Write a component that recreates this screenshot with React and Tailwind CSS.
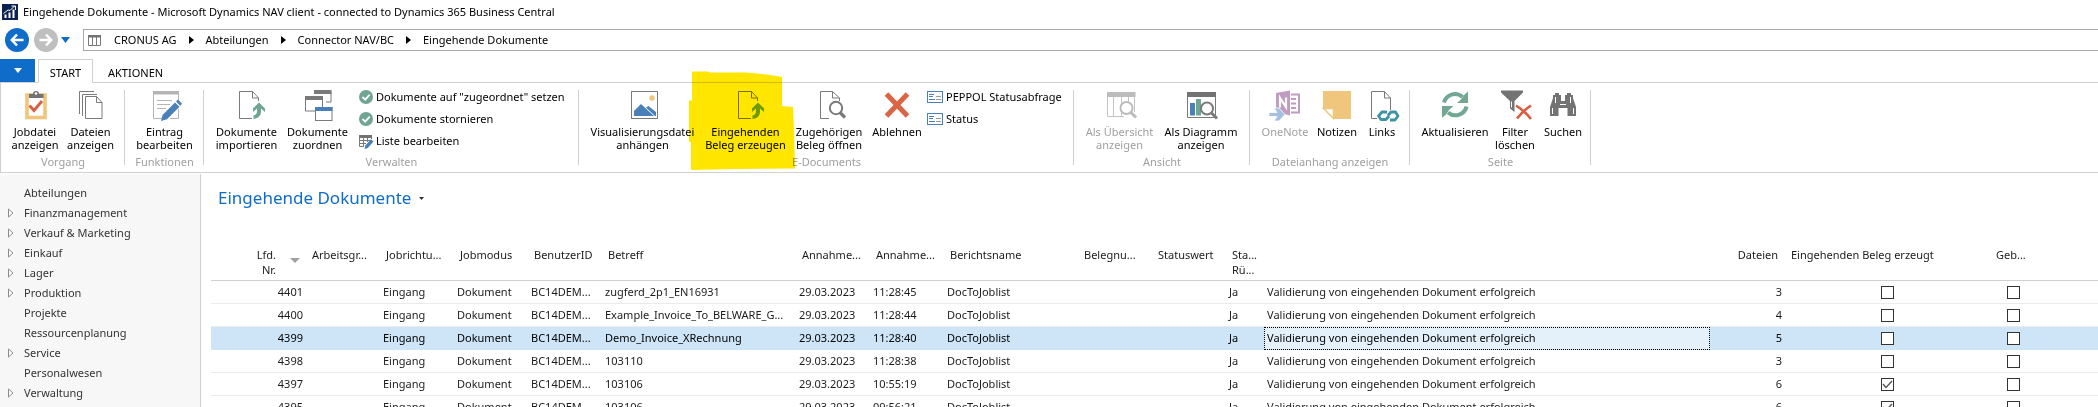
import React from "react";

const Svg = ({ children, className = "h-8 w-8" }) => (
  <svg viewBox="0 0 32 32" className={`${className} shrink-0 overflow-visible`} fill="none" aria-hidden="true">
    {children}
  </svg>
);

const ClipboardIcon = () => (
  <Svg>
    <rect x="8" y="5" width="18" height="22.5" fill="#fff" stroke="#efc67c" strokeWidth="3.6" />
    <path d="M10 8V4h4a3 3 0 0 1 6 0h4.500v4z" fill="#737373" />
    <circle cx="17" cy="3.500" r="1.300" fill="#fff" />
    <path d="M10.500 15.500l4.500 5 8-9.500" stroke="#d85e3f" strokeWidth="2.800" />
  </Svg>
);

const FilesIcon = () => (
  <Svg>
    <path d="M4.500 24V1.500H19M7.500 26V4.500H22" stroke="#7a7a7a" />
    <path d="M10.500 28.500v-22h11l5.500 6v16z" fill="#fff" stroke="#7a7a7a" />
    <path d="M21.500 6.500v6H27" stroke="#7a7a7a" />
  </Svg>
);

const EditEntryIcon = () => (
  <Svg>
    <path d="M4.500 3v25.500H14M29.500 3v8M29.500 19v9.500H21" stroke="#b4b4b4" />
    <rect x="4" y="1" width="26" height="3.500" fill="#b4b4b4" />
    <path d="M8 10.500h15M8 14.500h13M8 18.500h9" stroke="#b4b4b4" />
    <path d="M12 31l1.500-6L26 12.500l4.500 4.300L18 29.300z" fill="#4a80b8" />
    <path d="M27 11.500l2-2 4 4.300-1.800 2z" fill="#4a80b8" />
  </Svg>
);

const ImportIcon = ({ line = "#7a7a7a", arrow = "#6fa592" }) => (
  <Svg>
    <path d="M21 28.500H8.500v-27h13l6 6.500v3" stroke={line} />
    <path d="M21.500 1.500v6.500h6" stroke={line} />
    <path d="M28 12.500l6 6v3.500l-4-3.500v3c0 4.500-3 7-7.500 7.500v-3.500c2.500-.5 3.500-2 3.500-4.500v-2.500l-4 3.500v-3.500z" fill={arrow} />
  </Svg>
);

const WindowsIcon = () => (
  <Svg>
    <path d="M12 2h17v10h-5M3.500 8h17v13h-17z" stroke="#7a7a7a" />
    <path d="M12 0h17.500v4H12zM3 6h18v4H3z" fill="#7a7a7a" />
    <rect x="13.500" y="17.500" width="16.500" height="13" fill="#fff" stroke="#7a7a7a" />
    <rect x="13" y="17" width="17.500" height="4" fill="#4a80b8" />
  </Svg>
);

const PictureIcon = () => (
  <Svg>
    <rect x="4.500" y="1.500" width="26" height="27" fill="#fff" stroke="#7a7a7a" />
    <circle cx="25" cy="8" r="2.700" fill="#efc67c" />
    <path d="M7 26v-5l7-7 13 12z" fill="#4a80b8" />
    <path d="M19 17.500l2.500-1.500 7.500 6v4h-1z" fill="#4a80b8" />
  </Svg>
);

const FindDocIcon = () => (
  <Svg>
    <path d="M16 28.500H7.500v-27h12l7 6.500v3" stroke="#7a7a7a" />
    <path d="M19.500 1.500v6.500h7" stroke="#7a7a7a" />
    <circle cx="23" cy="18" r="6.200" fill="#fff" stroke="#7a7a7a" strokeWidth="2" />
    <path d="M27 22.500l5 5" stroke="#7a7a7a" strokeWidth="3.200" />
  </Svg>
);

const RejectIcon = () => (
  <Svg>
    <path d="M5.500 4l21 22M26.500 4l-21 22" stroke="#d96544" strokeWidth="5" />
  </Svg>
);

const OverviewIcon = () => (
  <Svg>
    <path d="M3.500 5v21.500H20M9.500 5v21M17.500 5v21M24.500 5v7M30.500 5v17" stroke="#c4c4c4" />
    <rect x="3" y="2" width="28.500" height="5" fill="#bcbcbc" />
    <circle cx="22.500" cy="18" r="6" fill="#fff" stroke="#bcbcbc" strokeWidth="2" />
    <path d="M27 22.500l5 5" stroke="#bcbcbc" strokeWidth="3" />
  </Svg>
);

const ChartIcon = () => (
  <Svg>
    <path d="M2.500 4v23.500h28V4" stroke="#7a7a7a" />
    <rect x="2" y="2" width="29" height="5" fill="#737373" />
    <rect x="5" y="13" width="5" height="12.500" fill="#4a80b8" />
    <rect x="11" y="9" width="5" height="16.500" fill="#6fa592" />
    <circle cx="22" cy="18.500" r="6" fill="#fff" stroke="#7a7a7a" strokeWidth="2" />
    <path d="M26.500 23l5.500 5.500" stroke="#7a7a7a" strokeWidth="3" />
  </Svg>
);

const OneNoteIcon = () => (
  <Svg>
    <path d="M7 3l14-2.500v25L7 22z" fill="#bf9cc0" />
    <path d="M22 4.500h8v18h-8M22 9h5M22 13.500h5M22 18h5" stroke="#bf9cc0" strokeWidth="2" />
    <path d="M11 17.500V8l6 9V7.500" stroke="#fff" strokeWidth="2.200" />
    <path d="M0 22.500h8l-3-4.500h5l6 6.500-6 6.500H5l3-4.500H0z" fill="#a5c0de" stroke="#fff" strokeWidth=".8" />
  </Svg>
);

const NoteIcon = () => (
  <Svg>
    <path d="M2 1h28v28H13L2 18z" fill="#efc67c" />
    <path d="M2.500 18.500h10v10z" fill="#fff" stroke="#efc67c" strokeWidth="1.500" />
  </Svg>
);

const LinksIcon = () => (
  <Svg>
    <path d="M11 28.500H5.500v-27h13l6 6.500v12" stroke="#7a7a7a" />
    <path d="M18.500 1.500v6.500h6" stroke="#7a7a7a" />
    <path d="M21 22h-5l-3.500 4 2.500 3.500h5l3-3.500M24 30h5l3-4-2.500-4h-4.500l-3 3.500" stroke="#3e94a5" strokeWidth="2.800" strokeLinejoin="round" />
  </Svg>
);

const RefreshIcon = () => (
  <Svg>
    <path d="M5 12.500C7 5 17 1 23.500 7" stroke="#72a893" strokeWidth="4" />
    <path d="M29 1.500V13H18l4-3.500 3.500-5z" fill="#72a893" />
    <path d="M27.500 16.500C26 24 16 28.500 9 22.500" stroke="#72a893" strokeWidth="4" />
    <path d="M3 28V16h11.500l-4.500 4-3 4.500z" fill="#72a893" />
  </Svg>
);

const FilterIcon = () => (
  <Svg>
    <path d="M2 .5h22v2L15.500 11v11L11 18.500V11L2 2.500z" fill="#737373" />
    <path d="M12.500 11.500v6" stroke="#fff" />
    <path d="M17 15.500c5 3 10 7.500 15 13.500M32 15.500c-6 4-10 8-14 13" stroke="#d85e3f" strokeWidth="2.600" />
  </Svg>
);

const BinocularsIcon = () => (
  <Svg>
    <path d="M3 26V17l3-9V5h2V3h4v2h2v6h4V5h2V3h4v2h2v3l3 9v9h-8.500v-8h-9v8z" fill="#737373" />
    <path d="M5.500 18v6M8.500 7v6M23.500 7v6M26.500 18v6M13 14.500h6" stroke="#fff" />
  </Svg>
);

const CheckBadge = () => (
  <svg viewBox="0 0 14 14" className="h-3.5 w-3.5 shrink-0" fill="none" aria-hidden="true">
    <circle cx="7" cy="7" r="7" fill="#6fa592" />
    <path d="M3.500 7l2.700 2.700 4.500-5" stroke="#fff" strokeWidth="1.800" />
  </svg>
);

const ListEditIcon = () => (
  <svg viewBox="0 0 14 14" className="h-3.5 w-3.5 shrink-0 overflow-visible" fill="none" aria-hidden="true">
    <path d="M.5 2v10.500H5M4.500 3v9.500M8.500 3v5M12.500 3v2M0 6.500h11M0 9.500h7" stroke="#7a7a7a" />
    <rect width="13" height="3" y="1" fill="#737373" />
    <path d="M5.500 15l.8-3.500L12 5.200l2.500 2.300L8.800 14z" fill="#4a80b8" />
  </svg>
);

const StatusIcon = () => (
  <svg viewBox="0 0 16 12" className="h-3 w-4 shrink-0" fill="none" aria-hidden="true">
    <rect x=".5" y=".5" width="15" height="11" fill="#fff" stroke="#4a80b8" />
    <path d="M2 3.500h5M2 5.500h4M2 8.500h6" stroke="#4a80b8" />
    <path d="M9 5.500h5M9 8.500h5" stroke="#9a9a9a" />
  </svg>
);

const Highlight = () => (
  <svg
    viewBox="0 0 108 100"
    className="pointer-events-none absolute -top-3 -left-3 h-[100px] w-[108px] mix-blend-multiply"
    aria-hidden="true"
  >
    <path
      d="M4 .5L20 .5 22 1.500 58 1.500Q75 2.500 94 6V35L105 36 106 60 107 97.500 47 98 4 99 3 98V71H1V29.500H4z"
      fill="#ffe600"
    />
  </svg>
);

const BigButton = ({ icon, lines, width, disabled, children }) => (
  <div className={`relative ${width} shrink-0`}>
    <button
      type="button"
      disabled={disabled}
      className={`flex w-full flex-col items-center pt-[7px] whitespace-nowrap ${disabled ? "text-[#a0a0a0]" : "text-black"}`}
    >
      {icon}
      <span className="mt-[3px] leading-[13px]">
        {lines.map((l) => (
          <span key={l} className="block">
            {l}
          </span>
        ))}
      </span>
    </button>
    {children}
  </div>
);

const SmallButton = ({ icon, label }) => (
  <button type="button" className="flex h-[22px] items-center gap-[3px] whitespace-nowrap text-black">
    {icon}
    {label}
  </button>
);

const Group = ({ label, width, pad = "pl-1.5", children }) => (
  <section aria-label={label} className={`flex shrink-0 flex-col ${width}`}>
    <div className="relative flex h-[85px] flex-col justify-between">
      <div className={`flex items-start ${pad}`}>{children}</div>
      <div className="absolute top-[7px] right-0 h-[75px] w-px bg-[#d0d0d0]" />
      <div className="text-center leading-[13px] text-[#a0a0a0]">{label}</div>
    </div>
  </section>
);

const nav = [
  ["Abteilungen", false],
  ["Finanzmanagement", true],
  ["Verkauf & Marketing", true],
  ["Einkauf", true],
  ["Lager", true],
  ["Produktion", true],
  ["Projekte", false],
  ["Ressourcenplanung", false],
  ["Service", true],
  ["Personalwesen", false],
  ["Verwaltung", true],
];

const rows = [
  ["4401", "zugferd_2p1_EN16931", "11:28:45", "3", false],
  ["4400", "Example_Invoice_To_BELWARE_G...", "11:28:44", "4", false],
  ["4399", "Demo_Invoice_XRechnung", "11:28:40", "5", false],
  ["4398", "103110", "11:28:38", "3", false],
  ["4397", "103106", "10:55:19", "6", true],
  ["4395", "103106", "09:56:21", "6", true],
];

const Box = ({ label, checked }) => (
  <span className="relative mx-auto block h-[13px] w-[13px]">
    <input
      type="checkbox"
      aria-label={label}
      defaultChecked={checked}
      className="peer block h-[13px] w-[13px] appearance-none border border-[#333] bg-white"
    />
    <svg
      viewBox="0 0 13 13"
      className="pointer-events-none absolute inset-0 hidden h-[13px] w-[13px] peer-checked:block"
      fill="none"
      aria-hidden="true"
    >
      <path d="M2 6l3 3.500L11 3" stroke="#555" strokeWidth="1.400" />
    </svg>
  </span>
);

const Crumb = ({ children, last }) => (
  <>
    <a href="#" className="whitespace-nowrap">
      {children}
    </a>
    {!last && (
      <svg viewBox="0 0 5 8" className="h-2 w-[5px]" aria-hidden="true">
        <path d="M0 0l5 4-5 4z" fill="#000" />
      </svg>
    )}
  </>
);

export default function App() {
  return (
    <div className="flex h-screen flex-col overflow-hidden bg-white font-['Noto_Sans','Open_Sans',sans-serif] text-[11px] text-black">
      <header className="flex h-6 shrink-0 items-center gap-[5px] pl-0.5">
        <svg viewBox="0 0 16 16" className="h-4 w-4" fill="none" aria-hidden="true">
          <rect width="16" height="16" fill="#0b2351" />
          <path d="M3.500 14v-3.500M7.500 14V8.500M11.500 14V5.500" stroke="#fff" strokeWidth="2" />
          <path d="M1.500 9.500L6 6l2 .5L12.500 2M9.500 2h4v4" stroke="#fff" />
        </svg>
        <h1>
          Eingehende Dokumente - Microsoft Dynamics NAV client - connected to Dynamics 365 Business Central
        </h1>
      </header>

      <div className="flex h-8 shrink-0 items-center pl-[5px]">
        <button type="button" aria-label="Zurück" className="flex h-6 w-6 items-center justify-center rounded-full bg-[#0f6cc9]">
          <svg viewBox="0 0 14 14" className="h-3.5 w-3.5" fill="none" aria-hidden="true">
            <path d="M7 1.500L1.800 7 7 12.500M2 7h11.500" stroke="#fff" strokeWidth="2.500" />
          </svg>
        </button>
        <button type="button" aria-label="Vorwärts" className="ml-[5px] flex h-6 w-6 items-center justify-center rounded-full bg-[#bfbfbf]">
          <svg viewBox="0 0 14 14" className="h-3.5 w-3.5" fill="none" aria-hidden="true">
            <path d="M7 1.500L12.200 7 7 12.500M12 7H.5" stroke="#fff" strokeWidth="2.500" />
          </svg>
        </button>
        <button type="button" aria-label="Verlauf" className="ml-[3px]">
          <svg viewBox="0 0 9 6" className="h-1.5 w-[9px]" aria-hidden="true">
            <path d="M0 0h9L4.500 6z" fill="#0f6cc9" />
          </svg>
        </button>
        <nav className="ml-[13px] flex h-[22px] flex-1 items-center gap-3 border border-r-0 border-[#a8a8a8] pl-1">
          <svg viewBox="0 0 13 11" className="mr-px h-[11px] w-[13px]" fill="none" aria-hidden="true">
            <path d="M.5 1v9.500h12V1M4.500 2v8M8.500 2v8" stroke="#7a7a7a" />
            <path d="M0 0h13v2.500H0z" fill="#737373" />
          </svg>
          <Crumb>CRONUS AG</Crumb>
          <Crumb>Abteilungen</Crumb>
          <Crumb>Connector NAV/BC</Crumb>
          <Crumb last>Eingehende Dokumente</Crumb>
        </nav>
      </div>

      <div className="flex h-[27px] shrink-0 items-end border-b border-[#d0d0d0]">
        <button type="button" aria-label="Anwendungsmenü" className="flex h-[23px] w-[35px] items-center justify-center bg-[#0f6cc9]">
          <svg viewBox="0 0 8 5" className="h-[5px] w-2" aria-hidden="true">
            <path d="M0 0h8L4 5z" fill="#fff" />
          </svg>
        </button>
        <button type="button" className="-mb-px ml-[3px] flex h-6 w-[55px] items-center justify-center border border-b-0 border-[#d0d0d0] bg-white pt-1">
          START
        </button>
        <button type="button" className="-mb-px ml-[15px] flex h-6 items-center pt-1">
          AKTIONEN
        </button>
      </div>

      <div className="flex shrink-0 border-b border-l border-[#d0d0d0] pb-1">
        <Group label="Vorgang" width="w-[124px]" pad="pl-[7px]">
          <BigButton width="w-[54px]" icon={<ClipboardIcon />} lines={["Jobdatei", "anzeigen"]} />
          <BigButton width="w-[57px]" icon={<FilesIcon />} lines={["Dateien", "anzeigen"]} />
        </Group>
        <Group label="Funktionen" width="w-[79px]">
          <BigButton width="w-[67px]" icon={<EditEntryIcon />} lines={["Eintrag", "bearbeiten"]} />
        </Group>
        <Group label="Verwalten" width="w-[375px]" pad="pl-[7px]">
          <BigButton width="w-[71px]" icon={<ImportIcon />} lines={["Dokumente", "importieren"]} />
          <BigButton width="w-[71px]" icon={<WindowsIcon />} lines={["Dokumente", "zuordnen"]} />
          <div className="flex flex-col pt-[3px] pl-1.5">
            <SmallButton icon={<CheckBadge />} label={'Dokumente auf "zugeordnet" setzen'} />
            <SmallButton icon={<CheckBadge />} label="Dokumente stornieren" />
            <SmallButton icon={<ListEditIcon />} label="Liste bearbeiten" />
          </div>
        </Group>
        <Group label="E-Documents" width="w-[495px]">
          <BigButton width="w-[115px]" icon={<PictureIcon />} lines={["Visualisierungsdatei", "anhängen"]} />
          <BigButton width="w-[91px]" icon={<ImportIcon arrow="#6cab2c" />} lines={["Eingehenden", "Beleg erzeugen"]}>
            <Highlight />
          </BigButton>
          <BigButton width="w-[76px]" icon={<FindDocIcon />} lines={["Zugehörigen", "Beleg öffnen"]} />
          <BigButton width="w-[60px]" icon={<RejectIcon />} lines={["Ablehnen"]} />
          <div className="flex flex-col pt-[3px]">
            <SmallButton icon={<StatusIcon />} label="PEPPOL Statusabfrage" />
            <SmallButton icon={<StatusIcon />} label="Status" />
          </div>
        </Group>
        <Group label="Ansicht" width="w-[176px]">
          <BigButton disabled width="w-[79px]" icon={<OverviewIcon />} lines={["Als Übersicht", "anzeigen"]} />
          <BigButton width="w-[84px]" icon={<ChartIcon />} lines={["Als Diagramm", "anzeigen"]} />
        </Group>
        <Group label="Dateianhang anzeigen" width="w-[160px]">
          <BigButton disabled width="w-[58px]" icon={<OneNoteIcon />} lines={["OneNote"]} />
          <BigButton width="w-[46px]" icon={<NoteIcon />} lines={["Notizen"]} />
          <BigButton width="w-[44px]" icon={<LinksIcon />} lines={["Links"]} />
        </Group>
        <Group label="Seite" width="w-[181px]">
          <BigButton width="w-[78px]" icon={<RefreshIcon />} lines={["Aktualisieren"]} />
          <BigButton width="w-[42px]" icon={<FilterIcon />} lines={["Filter", "löschen"]} />
          <BigButton width="w-[54px]" icon={<BinocularsIcon />} lines={["Suchen"]} />
        </Group>
      </div>

      <div className="mt-px flex min-h-0 flex-1">
        <nav className="w-[201px] shrink-0 border-r border-[#d0d0d0] bg-[#f7f7f7] pt-[9px]">
          <ul>
            {nav.map(([label, arrow]) => (
              <li key={label} className="flex h-5 items-center pl-2 text-[#333]">
                <span className="w-4">
                  {arrow && (
                    <svg viewBox="0 0 6 10" className="h-2.5 w-1.5" fill="none" aria-hidden="true">
                      <path d="M.5 1l4.500 4-4.500 4z" fill="#fff" stroke="#8c8c8c" />
                    </svg>
                  )}
                </span>
                <a href="#">{label}</a>
              </li>
            ))}
          </ul>
        </nav>

        <main className="min-w-0 flex-1 pl-2.5">
          <div className="flex h-12 items-center gap-2 pl-[7px]">
            <h2 className="text-[17px] text-[#0f6cc9]">Eingehende Dokumente</h2>
            <svg viewBox="0 0 5 3" className="h-[3px] w-[5px]" aria-hidden="true">
              <path d="M0 0h5L2.500 3z" fill="#333" />
            </svg>
          </div>
          <table className="mt-[25px] w-full table-fixed border-separate border-spacing-0 text-left text-[#1c1c1c]">
            <colgroup>
              <col className="w-[95px]" />
              <col className="w-[74px]" />
              <col className="w-[74px]" />
              <col className="w-[74px]" />
              <col className="w-[74px]" />
              <col className="w-[194px]" />
              <col className="w-[74px]" />
              <col className="w-[74px]" />
              <col className="w-[134px]" />
              <col className="w-[74px]" />
              <col className="w-[74px]" />
              <col className="w-[38px]" />
              <col className="w-[446px]" />
              <col className="w-[75px]" />
              <col className="w-[205px]" />
              <col className="w-[47px]" />
              <col />
            </colgroup>
            <thead className="leading-[15px] [&_th]:h-[34px] [&_th]:border-b [&_th]:border-[#d0d0d0] [&_th]:pl-1.5 [&_th]:align-top [&_th]:font-normal [&_th]:whitespace-nowrap">
              <tr>
                <th>
                  <span className="flex items-center justify-end gap-3.5 pr-1.5">
                    <span className="text-right">
                      Lfd.
                      <br />
                      Nr.
                    </span>
                    <svg viewBox="0 0 10 5" className="mb-1 h-[5px] w-2.5" aria-hidden="true">
                      <path d="M0 0h10L5 5z" fill="#a0a0a0" />
                    </svg>
                  </span>
                </th>
                <th>Arbeitsgr...</th>
                <th>Jobrichtu...</th>
                <th>Jobmodus</th>
                <th>BenutzerID</th>
                <th>Betreff</th>
                <th>Annahme...</th>
                <th>Annahme...</th>
                <th>Berichtsname</th>
                <th>Belegnu...</th>
                <th>Statuswert</th>
                <th>
                  Sta...
                  <br />
                  Rü...
                </th>
                <th />
                <th className="pr-[7px] text-right">Dateien</th>
                <th>Eingehenden Beleg erzeugt</th>
                <th>Geb...</th>
                <th />
              </tr>
            </thead>
            <tbody className="[&_td]:h-[23px] [&_td]:border-b [&_td]:border-[#ebebeb] [&_td]:pl-[3px] [&_td]:whitespace-nowrap">
              {rows.map(([nr, subject, time, files, done], i) => {
                const sel = i === 2;
                return (
                  <tr key={nr} aria-selected={sel} className={sel ? "bg-[#cde5f7] text-black [&>td]:border-[#cde5f7]" : ""}>
                    <td className="pr-[3px] text-right">{nr}</td>
                    <td />
                    <td>Eingang</td>
                    <td>Dokument</td>
                    <td>BC14DEM...</td>
                    <td>{subject}</td>
                    <td>29.03.2023</td>
                    <td>{time}</td>
                    <td>DocToJoblist</td>
                    <td />
                    <td />
                    <td>Ja</td>
                    <td className={sel ? "bg-[#e5f1fa] outline-1 -outline-offset-1 outline-black outline-dotted" : ""}>
                      Validierung von eingehenden Dokument erfolgreich
                    </td>
                    <td className="pr-[3px] text-right">{files}</td>
                    <td className="pr-1">
                      <Box label={`Eingehenden Beleg erzeugt ${nr}`} checked={done} />
                    </td>
                    <td className="pr-1">
                      <Box label={`Gebucht ${nr}`} checked={false} />
                    </td>
                    <td />
                  </tr>
                );
              })}
            </tbody>
          </table>
        </main>
      </div>
    </div>
  );
}
